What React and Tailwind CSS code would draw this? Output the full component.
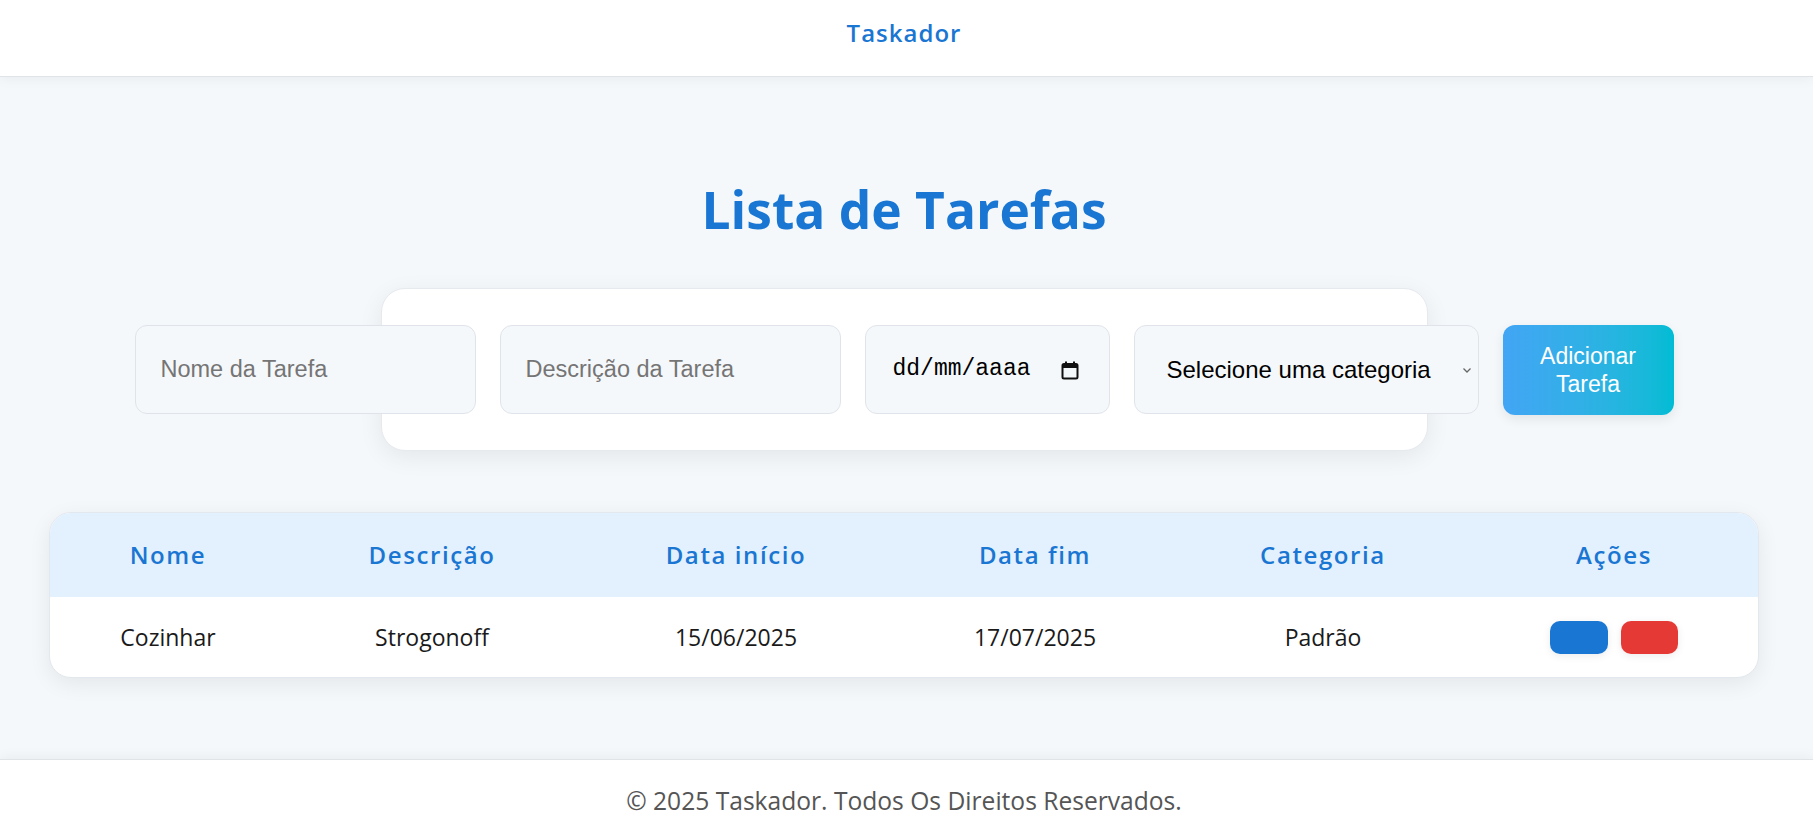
import React from "react";

const sans = { fontFamily: '"Open Sans", "Noto Sans", sans-serif' };

function CalendarIcon() {
  return (
    <svg width="20" height="20" viewBox="0 0 20 20" className="shrink-0">
      <rect x="2.5" y="4" width="15" height="14.5" rx="1.5" fill="none" stroke="#111" strokeWidth="2" />
      <rect x="2.5" y="4" width="15" height="4" fill="#111" />
      <rect x="5" y="1.5" width="2" height="3" fill="#111" />
      <rect x="13" y="1.5" width="2" height="3" fill="#111" />
    </svg>
  );
}

export default function App() {
  const cols = "grid grid-cols-[236px_292px_316px_282px_294px_1fr] items-center text-center";
  return (
    <div className="min-h-[823px] flex flex-col bg-[#f5f8fb]" style={sans}>
      <header className="h-[77px] bg-white border-b border-[#e0e3e7] shadow-[0_2px_12px_rgba(0,0,0,0.05)] flex items-center justify-center pr-[5px] pb-[10px] relative z-10">
        <span className="text-[24px] font-semibold text-[#1976d2] tracking-[1px]">Taskador</span>
      </header>

      <main className="flex-1 pr-[5px] pt-[101px] pb-[81px]">
        <h1 className="text-center text-[51.5px] leading-[62px] font-bold text-[#1976d2]">Lista de Tarefas</h1>

        <div className="mt-[48px] mx-auto w-[1047px] h-[163px] bg-white rounded-[24px] border border-[#e6e9ee] shadow-[0_6px_24px_rgba(0,0,0,0.07)] pt-[36px] flex justify-center gap-[24px]" style={{ fontFamily: '"Liberation Sans", Arial, sans-serif' }}>
          <div className="shrink-0 w-[341px] h-[89px] rounded-[12px] border border-[#e0e4ea] bg-[#f5f8fb] flex items-center pl-[25px] text-[23.5px] text-[#757575]">Nome da Tarefa</div>
          <div className="shrink-0 w-[341px] h-[89px] rounded-[12px] border border-[#e0e4ea] bg-[#f5f8fb] flex items-center pl-[25px] text-[23.5px] text-[#757575]">Descrição da Tarefa</div>
          <div className="shrink-0 w-[245px] h-[89px] rounded-[12px] border border-[#e0e4ea] bg-[#f5f8fb] flex items-center pl-[27px] pr-[29px] justify-between text-[23px] text-black">
            <span style={{ fontFamily: '"Liberation Mono", "Courier New", monospace' }}>dd/mm/aaaa</span>
            <CalendarIcon />
          </div>
          <div className="shrink-0 w-[345px] h-[89px] rounded-[12px] border border-[#e0e4ea] bg-[#f5f8fb] flex items-center pl-[32px] pr-[6px] justify-between text-[24px] text-black">
            <span>Selecione uma categoria</span>
            <svg width="10" height="8" viewBox="0 0 10 8" className="shrink-0">
              <path d="M1.5 2.5 L5 6 L8.5 2.5" fill="none" stroke="#666" strokeWidth="1.3" />
            </svg>
          </div>
          <button className="shrink-0 w-[171px] h-[90px] rounded-[12px] bg-gradient-to-r from-[#42a5f5] to-[#00bcd4] text-white text-[23px] leading-[28px] shadow-[0_4px_12px_rgba(0,0,0,0.08)] flex items-center justify-center text-center">
            Adicionar<br />Tarefa
          </button>
        </div>

        <div className="mt-[61px] mx-auto w-[1710px] bg-white rounded-[22px] border border-[#e3e8ee] shadow-[0_6px_22px_rgba(0,0,0,0.07)] overflow-hidden">
          <div className={`${cols} h-[84px] bg-[#e3f0fd] text-[#1976d2] text-[24px] font-semibold tracking-[1.6px]`}>
            <div>Nome</div>
            <div>Descrição</div>
            <div>Data início</div>
            <div>Data fim</div>
            <div>Categoria</div>
            <div>Ações</div>
          </div>
          <div className={`${cols} h-[80px] text-[#1a1a1a] text-[23px]`}>
            <div>Cozinhar</div>
            <div>Strogonoff</div>
            <div>15/06/2025</div>
            <div>17/07/2025</div>
            <div>Padrão</div>
            <div className="flex justify-center gap-[13px]">
              <button className="w-[58px] h-[33px] rounded-[10px] bg-[#1976d2] shadow-[0_2px_8px_rgba(0,0,0,0.08)]"></button>
              <button className="w-[57px] h-[33px] rounded-[10px] bg-[#e53935] shadow-[0_2px_8px_rgba(0,0,0,0.08)]"></button>
            </div>
          </div>
        </div>
      </main>

      <footer className="h-[65px] bg-white border-t border-[#e0e3e7] shadow-[0_-2px_12px_rgba(0,0,0,0.05)] pr-[5px] pt-[26px] text-center text-[24.6px] leading-[30px] text-[#555]">
        © 2025 Taskador. Todos Os Direitos Reservados.
      </footer>
    </div>
  );
}
